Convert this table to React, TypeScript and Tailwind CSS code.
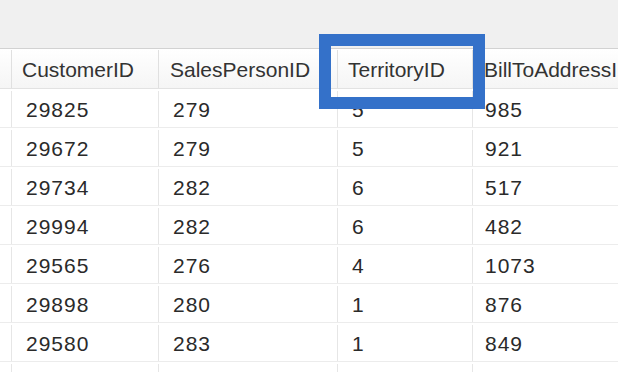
import React from "react";

const rows: [string, string, string, string][] = [
  ["29825", "279", "5", "985"],
  ["29672", "279", "5", "921"],
  ["29734", "282", "6", "517"],
  ["29994", "282", "6", "482"],
  ["29565", "276", "4", "1073"],
  ["29898", "280", "1", "876"],
  ["29580", "283", "1", "849"],
  ["", "", "", ""],
];

export default function App() {
  return (
    <div
      className="relative w-[618px] h-[372px] overflow-hidden bg-white text-[#2a2a2a]"
      style={{ fontFamily: '"Liberation Sans", Arial, sans-serif' }}
    >
      <div className="h-[49px] bg-[#f0f0f0] border-b border-[#d2d2d2]" />
      <div className="flex h-[40px] bg-gradient-to-b from-white to-[#f5f5f5] border-b border-[#e2e2e2] text-[21px] leading-none text-[#333] pt-[1px]">
        <div className="w-[12px] shrink-0 border-r border-[#e0e0e0]" />
        <div className="w-[147px] shrink-0 border-r border-[#e0e0e0] flex items-center pl-[10px]">CustomerID</div>
        <div className="w-[179px] shrink-0 border-r border-[#e0e0e0] flex items-center pl-[11px]">SalesPersonID</div>
        <div className="w-[135px] shrink-0 border-r border-[#e0e0e0] flex items-center pl-[10px]">TerritoryID</div>
        <div className="w-[200px] shrink-0 flex items-center pl-[11px] whitespace-nowrap">BillToAddressID</div>
      </div>
      {rows.map((r, i) => (
        <div key={i} className="flex h-[39px] border-b border-[#ececec] text-[21px] leading-none tracking-[1px] pt-[2px]">
          <div className="w-[12px] shrink-0 border-r border-[#e6e6e6]" />
          <div className="w-[147px] shrink-0 border-r border-[#e6e6e6] flex items-center pl-[14px]">{r[0]}</div>
          <div className="w-[179px] shrink-0 border-r border-[#e6e6e6] flex items-center pl-[14px]">{r[1]}</div>
          <div className="w-[135px] shrink-0 border-r border-[#e6e6e6] flex items-center pl-[14px]">{r[2]}</div>
          <div className="w-[200px] shrink-0 flex items-center pl-[12px]">{r[3]}</div>
        </div>
      ))}
      <div className="absolute left-[319px] top-[34px] w-[166px] h-[75px] border-[12px] border-[#3471c9]" />
    </div>
  );
}
